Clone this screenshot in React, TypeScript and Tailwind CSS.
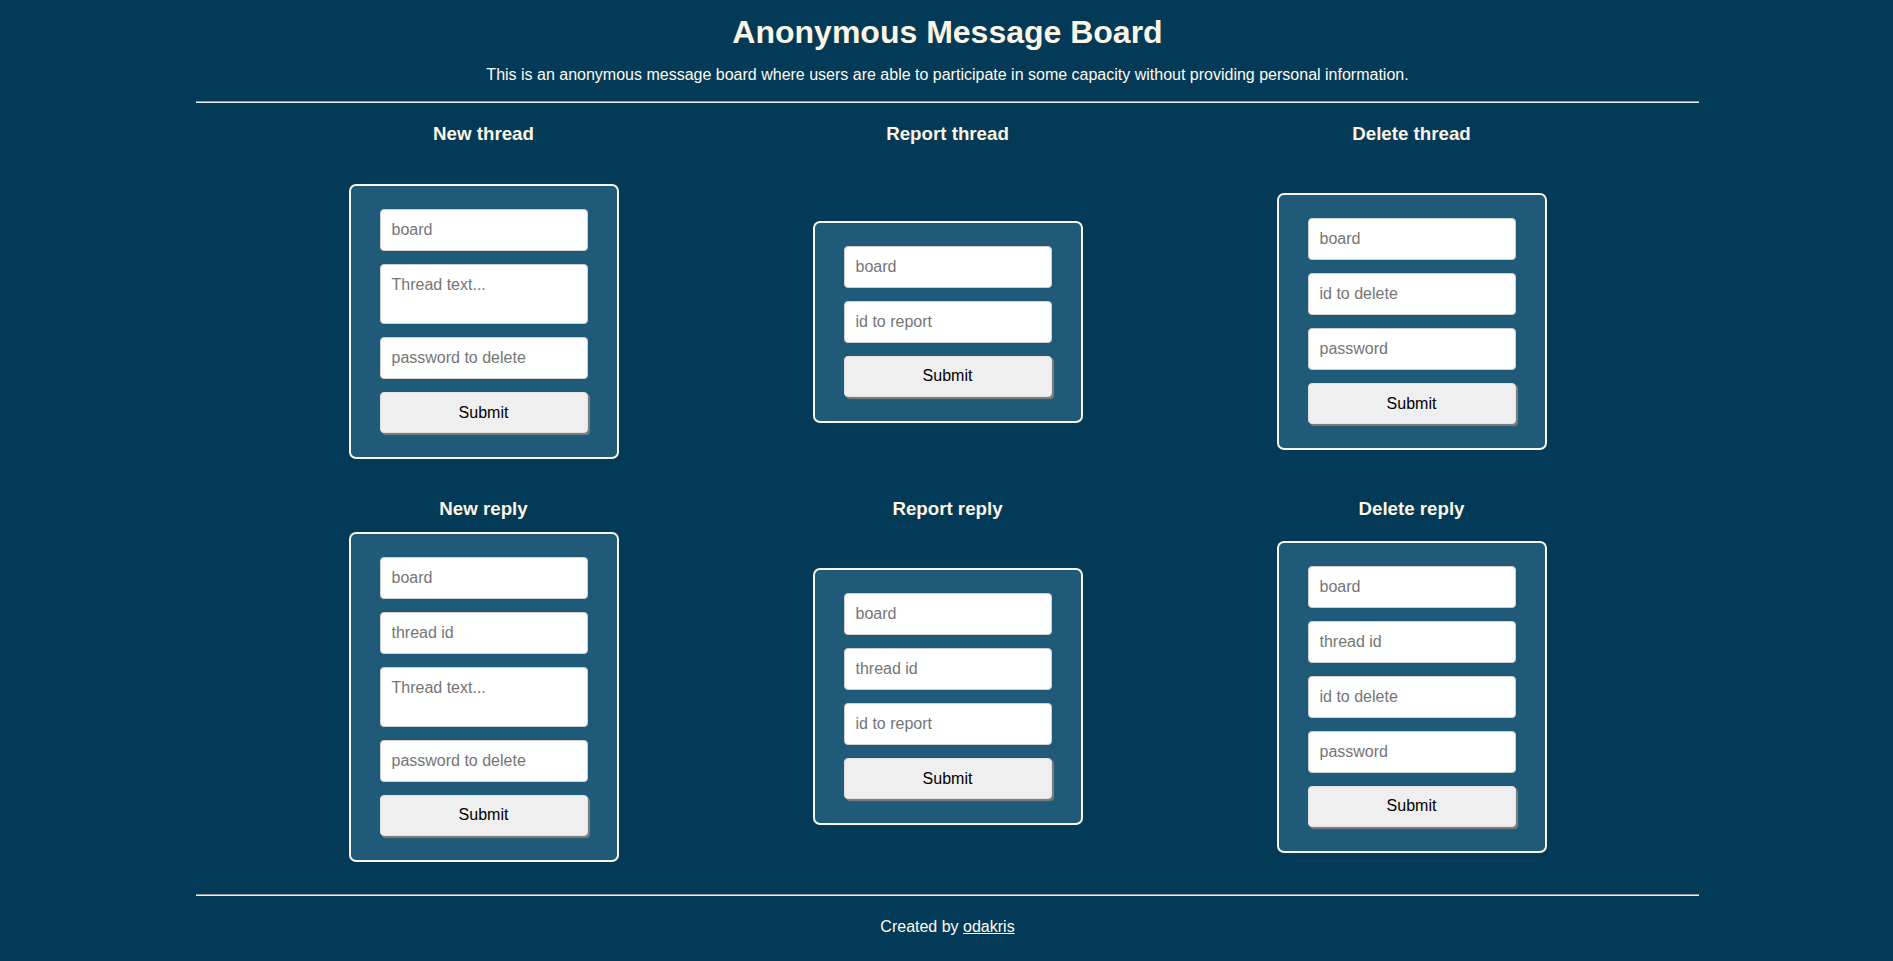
import React from 'react';

type Field = { placeholder: string; area?: boolean };

interface Form { title: string; fields: Field[] }

const rowOne: Form[] = [
  {
    title: 'New thread',
    fields: [{ placeholder: 'board' }, { placeholder: 'Thread text...', area: true }, { placeholder: 'password to delete' }],
  },
  { title: 'Report thread', fields: [{ placeholder: 'board' }, { placeholder: 'id to report' }] },
  {
    title: 'Delete thread',
    fields: [{ placeholder: 'board' }, { placeholder: 'id to delete' }, { placeholder: 'password' }],
  },
];

const rowTwo: Form[] = [
  {
    title: 'New reply',
    fields: [
      { placeholder: 'board' },
      { placeholder: 'thread id' },
      { placeholder: 'Thread text...', area: true },
      { placeholder: 'password to delete' },
    ],
  },
  {
    title: 'Report reply',
    fields: [{ placeholder: 'board' }, { placeholder: 'thread id' }, { placeholder: 'id to report' }],
  },
  {
    title: 'Delete reply',
    fields: [
      { placeholder: 'board' },
      { placeholder: 'thread id' },
      { placeholder: 'id to delete' },
      { placeholder: 'password' },
    ],
  },
];

const inputCls =
  'w-[208px] bg-white border border-[#cfcfcf] rounded-[4px] px-[11px] text-[16px] text-black placeholder:text-[#757575] outline-none';

function FormBox({ fields }: { fields: Field[] }) {
  return (
    <form
      onSubmit={(e) => e.preventDefault()}
      className="w-[270px] bg-[#1f5a78] border-2 border-[#fbf3e6] rounded-[7px] px-[29px] pt-[23px] pb-[24px] flex flex-col gap-[13px]"
    >
      {fields.map((f, i) =>
        f.area ? (
          <textarea key={i} placeholder={f.placeholder} className={`${inputCls} h-[60px] pt-[8px] resize-none block`} />
        ) : (
          <input key={i} type="text" placeholder={f.placeholder} className={`${inputCls} h-[42px] block`} />
        )
      )}
      <button
        type="submit"
        className="w-[208px] h-[41px] bg-[#efefef] rounded-[4px] border border-[#e2e2e2] text-[16px] text-black shadow-[2px_2px_1px_#7d7d7d]"
      >
        Submit
      </button>
    </form>
  );
}

function Row({ forms }: { forms: Form[] }) {
  return (
    <div className="w-[1392px] mx-auto grid grid-cols-3">
      {forms.map((f) => (
        <h3 key={f.title} className="text-center font-bold text-[18.72px] leading-[22px] text-[#fdf5e6]">
          {f.title}
        </h3>
      ))}
      {forms.map((f) => (
        <div key={f.title + '-box'} className="h-[353px] flex items-center justify-center">
          <FormBox fields={f.fields} />
        </div>
      ))}
    </div>
  );
}

function Rule() {
  return <div className="h-0 border-t border-b border-t-[#9a9a9a] border-b-[#eeeeee]" />;
}

export default function App() {
  return (
    <div className="min-h-screen bg-[#033a57] text-[#fdf5e6] font-['Liberation_Sans',Arial,sans-serif]">
      <div className="w-[1503px] ml-[196px]">
        <h1 className="pt-[14px] text-center font-bold text-[32px] leading-[37px]">Anonymous Message Board</h1>
        <p className="mt-[15px] text-center text-[16px] leading-[18px] text-[#fffaf2]">
          This is an anonymous message board where users are able to participate in some capacity without providing
          personal information.
        </p>
        <div className="mt-[17px]">
          <Rule />
        </div>

        <div className="mt-[20px]">
          <Row forms={rowOne} />
        </div>
        <Row forms={rowTwo} />

        <div className="mt-[21px]">
          <Rule />
        </div>
        <p className="mt-[22px] text-center text-[16px] leading-[18px] text-[#fffaf2]">
          Created by <a href="#" className="underline">odakris</a>
        </p>
      </div>
    </div>
  );
}
